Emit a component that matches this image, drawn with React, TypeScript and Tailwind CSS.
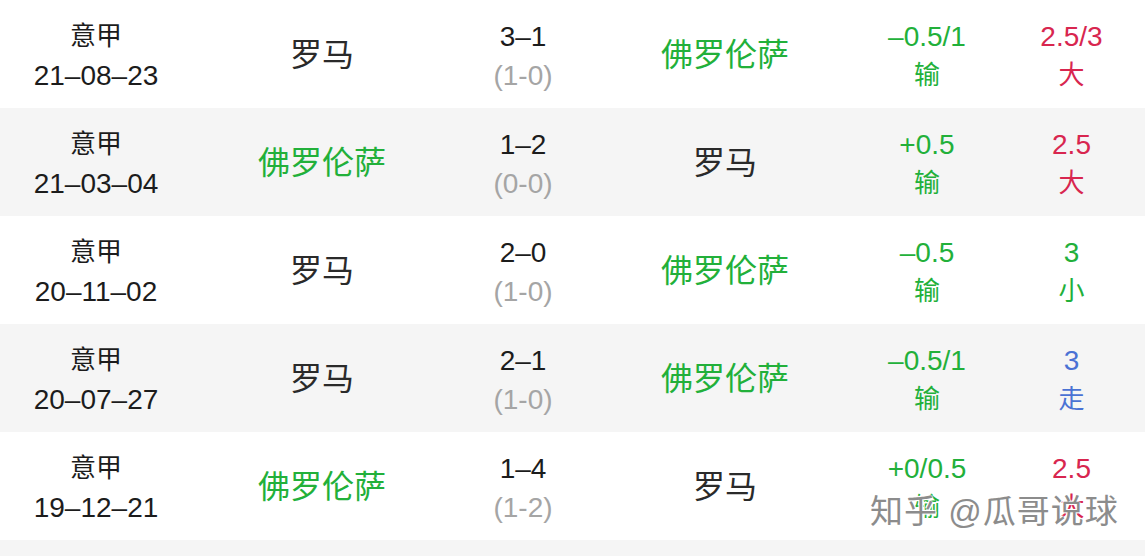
const GREEN = "text-[#22b03a]";
const RED = "text-[#d8264f]";
const BLUE = "text-[#4a72d4]";

type Match = {
  date: string;
  home: string;
  homeWin: boolean;
  score: string;
  half: string;
  away: string;
  awayWin: boolean;
  hcap: string;
  hres: string;
  ou: string;
  ores: string;
  oColor: string;
};

const matches: Match[] = [
  { date: "21–08–23", home: "罗马", homeWin: false, score: "3–1", half: "(1-0)", away: "佛罗伦萨", awayWin: true, hcap: "–0.5/1", hres: "输", ou: "2.5/3", ores: "大", oColor: RED },
  { date: "21–03–04", home: "佛罗伦萨", homeWin: true, score: "1–2", half: "(0-0)", away: "罗马", awayWin: false, hcap: "+0.5", hres: "输", ou: "2.5", ores: "大", oColor: RED },
  { date: "20–11–02", home: "罗马", homeWin: false, score: "2–0", half: "(1-0)", away: "佛罗伦萨", awayWin: true, hcap: "–0.5", hres: "输", ou: "3", ores: "小", oColor: GREEN },
  { date: "20–07–27", home: "罗马", homeWin: false, score: "2–1", half: "(1-0)", away: "佛罗伦萨", awayWin: true, hcap: "–0.5/1", hres: "输", ou: "3", ores: "走", oColor: BLUE },
  { date: "19–12–21", home: "佛罗伦萨", homeWin: true, score: "1–4", half: "(1-2)", away: "罗马", awayWin: false, hcap: "+0/0.5", hres: "输", ou: "2.5", ores: "大", oColor: RED },
];

const Row = ({ m, gray }: { m: Match; gray: boolean }) => (
  <div
    className={`grid grid-cols-[192px_260px_142px_262px_142px_147px] h-[108px] items-center text-center ${
      gray ? "bg-[#f5f5f5]" : "bg-white"
    }`}
  >
    <div className="flex flex-col leading-[39px] text-[#1c1c1c] pt-[4px]">
      <span className="text-[26px]">意甲</span>
      <span className="text-[28px]">{m.date}</span>
    </div>
    <div className={`text-[32px] pt-[2px] ${m.homeWin ? GREEN : "text-[#2a2a2a]"}`}>{m.home}</div>
    <div className="flex flex-col text-[28px] leading-[39px] pt-[4px]">
      <span className="text-[#1c1c1c]">{m.score}</span>
      <span className="text-[#a5a5a5]">{m.half}</span>
    </div>
    <div className={`text-[32px] pt-[2px] ${m.awayWin ? GREEN : "text-[#2a2a2a]"}`}>{m.away}</div>
    <div className={`flex flex-col leading-[39px] pt-[4px] ${GREEN}`}>
      <span className="text-[28px]">{m.hcap}</span>
      <span className="text-[26px]">{m.hres}</span>
    </div>
    <div className={`flex flex-col leading-[39px] pt-[4px] ${m.oColor}`}>
      <span className="text-[28px]">{m.ou}</span>
      <span className="text-[26px]">{m.ores}</span>
    </div>
  </div>
);

export default function App() {
  return (
    <div
      className="relative w-[1145px] h-[556px] overflow-hidden bg-white"
      style={{ fontFamily: '"Liberation Sans", "Noto Sans CJK SC", sans-serif' }}
    >
      {matches.map((m, i) => (
        <Row key={i} m={m} gray={i % 2 === 1} />
      ))}
      <div className="h-[108px] bg-[#f5f5f5]" />
      <div className="absolute left-[870px] top-[490px] text-[33px] leading-[44px] text-[#8c8c8c] tracking-[1px] [text-shadow:0_0_2px_#fff,0_0_2px_#fff,1px_1px_0_#fff,-1px_-1px_0_#fff]">
        知乎 @瓜哥说球
      </div>
    </div>
  );
}
